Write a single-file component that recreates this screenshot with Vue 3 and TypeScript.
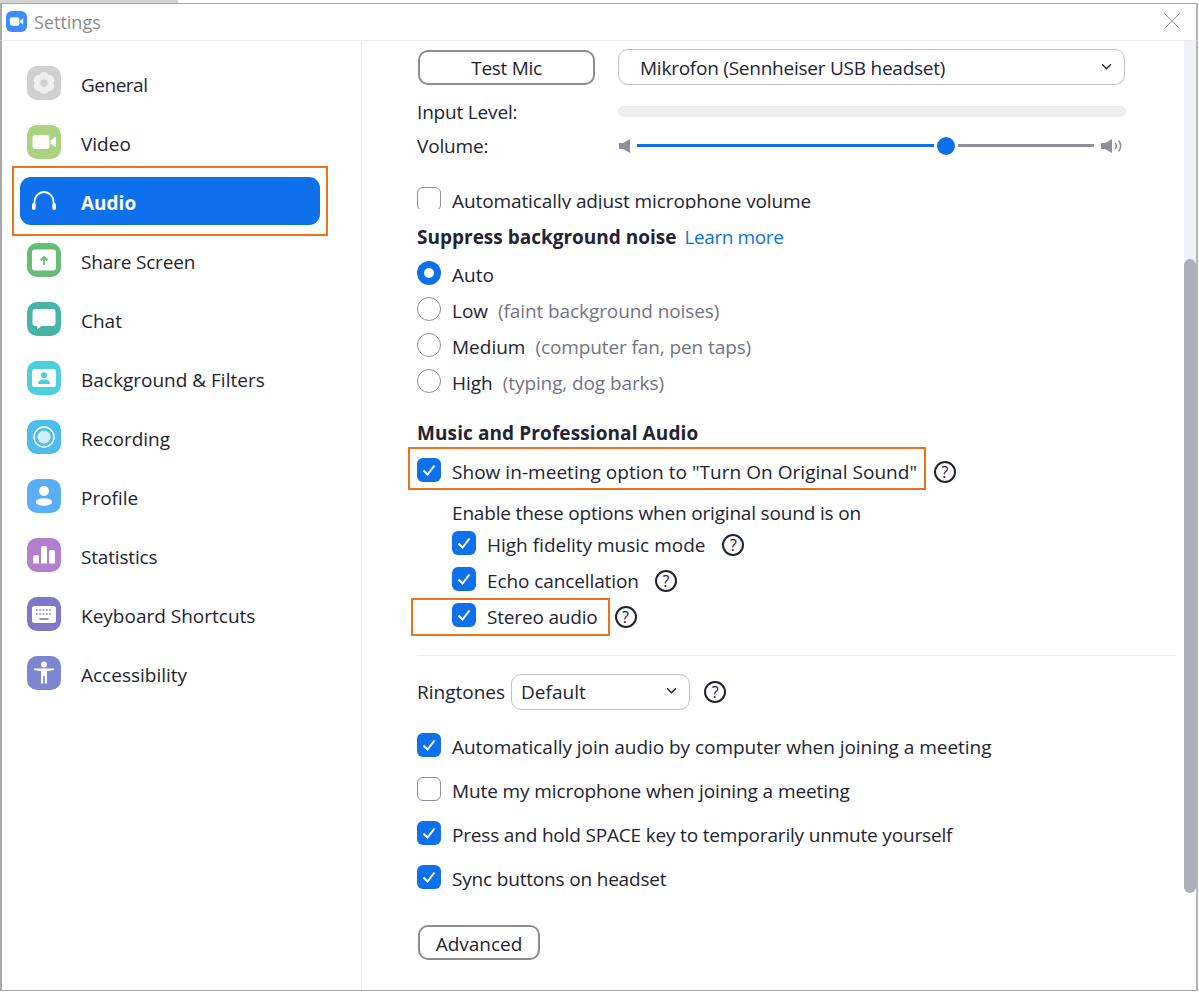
<script setup lang="ts">
interface NavItem { key: string; label: string; color: string; fit: string }
const nav: NavItem[] = [
  { key: 'general', label: 'General', color: '#d0d0d0', fit: 'tightest' },
  { key: 'video', label: 'Video', color: '#a9d37f', fit: '' },
  { key: 'audio', label: 'Audio', color: '', fit: '' },
  { key: 'share', label: 'Share Screen', color: '#67bc76', fit: 'tighter' },
  { key: 'chat', label: 'Chat', color: '#46b5a8', fit: '' },
  { key: 'bg', label: 'Background & Filters', color: '#4dd0dd', fit: '' },
  { key: 'rec', label: 'Recording', color: '#4fbcf0', fit: '' },
  { key: 'profile', label: 'Profile', color: '#5aaef5', fit: '' },
  { key: 'stats', label: 'Statistics', color: '#b57fcf', fit: 'tighter' },
  { key: 'keys', label: 'Keyboard Shortcuts', color: '#7f78c8', fit: '' },
  { key: 'a11y', label: 'Accessibility', color: '#7c87cf', fit: '' },
]
const petals = [0, 60, 120, 180, 240, 300]
const noise = [
  { label: 'Auto', hint: '', on: true },
  { label: 'Low', hint: '(faint background noises)', on: false },
  { label: 'Medium', hint: '(computer fan, pen taps)', on: false },
  { label: 'High', hint: '(typing, dog barks)', on: false },
]
const general = [
  { label: 'Automatically join audio by computer when joining a meeting', on: true, fit: 'slight' },
  { label: 'Mute my microphone when joining a meeting', on: false, fit: 'tight' },
  { label: 'Press and hold SPACE key to temporarily unmute yourself', on: true, fit: 'tighter' },
  { label: 'Sync buttons on headset', on: true, fit: 'tighter' },
]
</script>

<template>
  <div class="window">
    <header class="titlebar">
      <svg class="logo" viewBox="0 0 22 22">
        <rect width="22" height="22" rx="6" fill="#3f8cff" />
        <rect x="4" y="6.500" width="10" height="9" rx="2.400" fill="#fff" />
        <path d="M14.800 10.200 18 7.600v6.800l-3.200-2.600z" fill="#fff" />
      </svg>
      <span class="title">Settings</span>
      <svg class="close" viewBox="0 0 16 16"><path d="M.5.5l15 15M15.500.5l-15 15" stroke="#9a9a9a" fill="none" /></svg>
    </header>
    <div class="body">
      <nav class="sidebar">
        <div v-for="n in nav" :key="n.key" class="nav-row" :class="{ active: n.key === 'audio' }">
          <span v-if="n.key === 'audio'" class="callout nav-callout"></span>
          <span class="nav-icon" :style="{ background: n.color }">
            <svg viewBox="0 0 34 34">
              <g v-if="n.key === 'general'" fill="#efefef">
                <circle v-for="p in petals" :key="p" cx="17" cy="10.800" r="4.800" :transform="`rotate(${p} 17 17)`" />
                <circle cx="17" cy="17" r="7" />
                <circle cx="17" cy="17" r="3.800" fill="#d0d0d0" />
              </g>
              <g v-else-if="n.key === 'video'" fill="#fff">
                <rect x="5.500" y="10" width="17" height="14" rx="3" />
                <path d="M23.500 15.500 29 11.500v11l-5.500-4z" />
              </g>
              <g v-else-if="n.key === 'audio'">
                <path d="M7.500 23v-5.500a9.500 9.500 0 0 1 19 0V23" fill="none" stroke="#fff" stroke-width="1.800" />
                <rect x="5" y="19" width="3.600" height="7" rx="1.800" fill="#fff" />
                <rect x="25.400" y="19" width="3.600" height="7" rx="1.800" fill="#fff" />
              </g>
              <g v-else-if="n.key === 'share'">
                <rect x="5" y="6.500" width="24" height="21" rx="3" fill="#fff" />
                <path d="M17 22v-7.500M13.500 17.500l3.500-3.500 3.500 3.500" fill="none" stroke="#67bc76" stroke-width="1.800" />
              </g>
              <path v-else-if="n.key === 'chat'" fill="#fff" d="M8.500 7h17a3 3 0 0 1 3 3v11a3 3 0 0 1-3 3H14.500l-4.500 3.500V24H8.500a3 3 0 0 1-3-3V10a3 3 0 0 1 3-3z" />
              <g v-else-if="n.key === 'bg'">
                <rect x="5" y="8" width="24" height="18" rx="2.500" fill="#fff" />
                <circle cx="17" cy="14.300" r="3" fill="#4dd0dd" />
                <path d="M11 23c0-3.500 2.500-4.500 6-4.500s6 1 6 4.500z" fill="#4dd0dd" />
              </g>
              <g v-else-if="n.key === 'rec'" fill="none" stroke="#fff">
                <circle cx="17" cy="17" r="10" stroke-width="1.500" />
                <circle cx="17" cy="17" r="6.500" fill="#fff" fill-opacity=".75" stroke="none" />
              </g>
              <g v-else-if="n.key === 'profile'" fill="#fff">
                <circle cx="17" cy="12" r="5" />
                <ellipse cx="17" cy="23" rx="8.200" ry="3.800" />
              </g>
              <g v-else-if="n.key === 'stats'" fill="#fff">
                <path d="M6.300 25.500V18.500a1.500 1.500 0 0 1 1.500-1.500h2.700a1.500 1.500 0 0 1 1.500 1.500v7z" />
                <path d="M14 25.500V10a2 2 0 0 1 2-2h2a2 2 0 0 1 2 2v15.500z" />
                <path d="M22 25.500V14a2 2 0 0 1 2-2h2a2 2 0 0 1 2 2v11.500z" />
              </g>
              <g v-else-if="n.key === 'keys'">
                <rect x="5" y="9" width="24" height="17" rx="2.500" fill="#fff" />
                <path d="M9 13h16M9 17h16" stroke="#7f78c8" stroke-width="1.600" stroke-dasharray="1.600 1.700" />
                <path d="M12.500 22h9" stroke="#7f78c8" stroke-width="1.600" />
              </g>
              <g v-else-if="n.key === 'a11y'" fill="#fff">
                <circle cx="17" cy="8.500" r="3" />
                <path d="M7 12.500h20v1.500l-7 1.300V27.500h-2.200v-7.500h-1.600v7.500H14V15.300L7 14z" />
              </g>
            </svg>
          </span>
          <span class="nav-label" :class="n.fit">{{ n.label }}</span>
        </div>
      </nav>
      <main class="content">
        <div class="scroll-track"></div>
        <div class="scroll-thumb"></div>
        <div class="mic-row">
          <button class="btn test-btn">Test Mic</button>
          <div class="select mic-select">
            <span class="mic-name">Mikrofon (Sennheiser USB headset)</span>
            <svg class="chev" viewBox="0 0 10 6"><path d="M1 1l4 4 4-4" fill="none" stroke="#232333" stroke-width="1.300" /></svg>
          </div>
        </div>
        <div class="level-row">
          <span class="row-label tighter">Input Level:</span>
          <div class="level"></div>
        </div>
        <div class="volume-row">
          <span class="row-label tighter">Volume:</span>
          <div class="volume">
            <svg class="spk-small" viewBox="0 0 11 14"><path d="M0 4h4l7-4v14l-7-4H0z" fill="#8f8f9c" /></svg>
            <div class="track">
              <span class="track-on"></span>
              <span class="thumb"></span>
              <span class="track-off"></span>
            </div>
            <svg class="spk-big" viewBox="0 0 22 14"><path d="M0 4h4l7-4v14l-7-4H0z" fill="#8f8f9c" /><path d="M14 4a4.500 4.500 0 0 1 0 6M17.500 1.500a8 8 0 0 1 0 11" fill="none" stroke="#8f8f9c" stroke-width="1.600" /></svg>
          </div>
        </div>
        <div class="clipped">
          <div class="check-row top">
            <span class="box"></span>
            <span class="tight">Automatically adjust microphone volume</span>
          </div>
        </div>
        <div class="heading noise-head">
          <b>Suppress background noise</b>
          <a class="link">Learn more</a>
        </div>
        <div class="radios">
          <div v-for="r in noise" :key="r.label" class="radio-row">
            <span class="radio" :class="{ on: r.on }"></span>
            <span>{{ r.label }}</span>
            <span v-if="r.hint" class="hint">{{ r.hint }}</span>
          </div>
        </div>
        <div class="heading music-head"><b>Music and Professional Audio</b></div>
        <div class="check-row original">
          <span class="callout original-callout"></span>
          <span class="box on"><svg viewBox="0 0 24 24"><path d="M6.500 12.500l4 4 7-9" /></svg></span>
          <span class="wide">Show in-meeting option to "Turn On Original Sound"</span>
          <span class="help original-help">?</span>
        </div>
        <div class="sub">
          <div class="sub-title tighter">Enable these options when original sound is on</div>
          <div class="check-row sub-row">
            <span class="box on"><svg viewBox="0 0 24 24"><path d="M6.500 12.500l4 4 7-9" /></svg></span>
            <span>High fidelity music mode</span>
            <span class="help gap-high">?</span>
          </div>
          <div class="check-row sub-row">
            <span class="box on"><svg viewBox="0 0 24 24"><path d="M6.500 12.500l4 4 7-9" /></svg></span>
            <span class="tight">Echo cancellation</span>
            <span class="help gap-echo">?</span>
          </div>
          <div class="check-row sub-row">
            <span class="callout stereo-callout"></span>
            <span class="box on"><svg viewBox="0 0 24 24"><path d="M6.500 12.500l4 4 7-9" /></svg></span>
            <span class="tighter">Stereo audio</span>
            <span class="help gap-stereo">?</span>
          </div>
        </div>
        <div class="divider"></div>
        <div class="ring-row">
          <span>Ringtones</span>
          <div class="select ring-select">
            <span>Default</span>
            <svg class="chev" viewBox="0 0 10 6"><path d="M1 1l4 4 4-4" fill="none" stroke="#232333" stroke-width="1.300" /></svg>
          </div>
          <span class="help">?</span>
        </div>
        <div class="general">
          <div v-for="g in general" :key="g.label" class="check-row general-row">
            <span class="box" :class="{ on: g.on }"><svg v-if="g.on" viewBox="0 0 24 24"><path d="M6.500 12.500l4 4 7-9" /></svg></span>
            <span :class="g.fit">{{ g.label }}</span>
          </div>
        </div>
        <button class="btn adv-btn">Advanced</button>
      </main>
    </div>
  </div>
</template>

<style>
html, body { background: #fff; }
</style>

<style scoped>
.window {
  box-sizing: border-box;
  width: 1199px;
  height: 992px;
  padding: 3px 1px 1px 0;
  font-family: "Open Sans", "Noto Sans", sans-serif;
  font-size: 19px;
  color: #232333;
  overflow: hidden;
  display: flex;
  flex-direction: column;
  background: linear-gradient(#d4d4d4, #d4d4d4) no-repeat 0 0 / 178px 3px;
}
.slight { letter-spacing: -0.035px; }
.wide { letter-spacing: 0.04px; }
.tight { letter-spacing: -0.1px; }
.tighter { letter-spacing: -0.18px; }
.tightest { letter-spacing: -0.5px; }
.titlebar {
  flex: none;
  height: 34px;
  display: flex;
  align-items: center;
  padding: 0 0 2px 4px;
  background: #fff;
  border-top: 1px solid #a9a9a9;
  border-left: 2px solid #a9a9a9;
  border-right: 2px solid #b5b5b5;
  border-bottom: 1px solid #ececec;
}
.logo { width: 21px; height: 21px; }
.title { margin: 2px 0 0 7px; color: #8c8c8c; font-size: 18px; }
.close { width: 16px; height: 16px; margin-left: auto; margin-right: 16px; }
.body {
  flex: 1;
  display: flex;
  min-height: 0;
  border-left: 2px solid #a9a9a9;
  border-right: 2px solid #b5b5b5;
  border-bottom: 1px solid #a9a9a9;
}
.sidebar {
  flex: none;
  width: 360px;
  box-sizing: border-box;
  border-right: 1px solid #ececec;
  padding-top: 12px;
}
.nav-row {
  position: relative;
  height: 59px;
  display: flex;
  align-items: center;
  padding-left: 25px;
}
.nav-icon {
  align-self: flex-start;
  margin-top: 13px;
  width: 34px;
  height: 34px;
  border-radius: 10px;
  flex: none;
}
.nav-icon svg { display: block; width: 34px; height: 34px; }
.nav-label { margin-left: 20px; margin-top: 5px; }
.active::before {
  content: "";
  position: absolute;
  left: 18px;
  top: 6px;
  width: 300px;
  height: 48px;
  border-radius: 11px;
  background: #0e71eb;
}
.active .nav-icon, .active .nav-label { position: relative; }
.active .nav-label { color: #fff; font-weight: 700; }
.callout {
  position: absolute;
  box-sizing: border-box;
  border: 2px solid #ed7218;
  pointer-events: none;
}
.nav-callout { left: 10px; top: -5px; width: 316px; height: 70px; }
.content {
  position: relative;
  flex: 1;
  min-width: 0;
  padding: 9px 0 0 55px;
}
.scroll-track {
  position: absolute;
  right: 0;
  top: 0;
  width: 12px;
  height: 220px;
  background: #f1f1f8;
}
.scroll-thumb {
  position: absolute;
  right: 0;
  top: 218px;
  width: 12px;
  height: 634px;
  border-radius: 6px;
  background: #aeaeb8;
}
.mic-row { display: flex; align-items: flex-start; gap: 23px; height: 36px; padding-left: 1px; }
.btn {
  box-sizing: border-box;
  font: inherit;
  color: inherit;
  background: #fff;
  border: 2px solid #8d8d8d;
  border-radius: 10px;
  padding: 0;
}
.test-btn { width: 177px; height: 35px; letter-spacing: -0.3px; }
.select {
  box-sizing: border-box;
  display: flex;
  align-items: center;
  justify-content: space-between;
  border: 1px solid #c0c0c8;
  border-radius: 10px;
}
.mic-select { width: 507px; height: 36px; margin-top: -1px; padding: 2px 12px 0 21px; }
.mic-name { letter-spacing: -0.24px; }
.chev { width: 11px; height: 7px; margin-bottom: 4px; }
.level-row, .volume-row { display: flex; align-items: center; }
.level-row { margin-top: 9px; height: 33px; }
.row-label { width: 201px; flex: none; }
.level { width: 508px; height: 11px; border-radius: 6px; background: #eeeeee; }
.volume-row { height: 35px; }
.volume { width: 505px; display: flex; align-items: center; }
.spk-small { width: 11px; height: 14px; flex: none; margin-left: 1px; }
.spk-big { width: 22px; height: 14px; flex: none; margin-left: 7px; }
.track { flex: 1; display: flex; align-items: center; margin-left: 7px; }
.track-on { width: 297px; height: 3px; background: #0e71eb; }
.thumb { width: 18px; height: 18px; border-radius: 50%; background: #0e71eb; margin: 0 3px; }
.track-off { flex: 1; height: 3px; background: #8f8f9c; }
.clipped { margin-top: 22px; padding-top: 3px; height: 21px; overflow: hidden; }
.check-row { position: relative; display: flex; align-items: center; }
.top { height: 26px; }
.box {
  box-sizing: border-box;
  flex: none;
  width: 24px;
  height: 24px;
  margin: 0 11px 4px 0;
  border: 1px solid #8f8f9c;
  border-radius: 6px;
  background: #fff;
}
.box.on { border: 0; background: #0e71eb; }
.box svg { display: block; width: 24px; height: 24px; fill: none; stroke: #fff; stroke-width: 2; }
.heading { display: flex; align-items: baseline; gap: 8px; }
.noise-head { margin-top: 15px; height: 26px; }
.music-head b { letter-spacing: 0.1px; }
.link { color: #0e71eb; letter-spacing: -0.4px; }
.radios { margin-top: 7px; }
.radio-row { display: flex; align-items: center; height: 36px; }
.radio {
  box-sizing: border-box;
  flex: none;
  width: 24px;
  height: 24px;
  margin: 0 11px 5px 0;
  border: 1px solid #8f8f9c;
  border-radius: 50%;
}
.radio.on { border: 7px solid #0e71eb; }
.hint { margin-left: 10px; color: #747487; letter-spacing: -0.1px; }
.music-head { margin-top: 19px; height: 26px; }
.original { margin-top: 13px; height: 26px; }
.original-callout { left: -9px; top: -12px; width: 518px; height: 43px; }
.help {
  box-sizing: border-box;
  flex: none;
  display: inline-block;
  width: 22px;
  height: 22px;
  border: 2px solid #232333;
  border-radius: 50%;
  font-size: 16px;
  line-height: 18px;
  text-align: center;
}
.original-help { margin-left: 17px; }
.sub { margin-left: 35px; margin-top: 15px; }
.sub-title { height: 27px; }
.sub-row { height: 36px; }
.gap-high { margin-left: 17px; }
.gap-echo { margin-left: 16px; }
.gap-stereo { margin-left: 17px; }
.stereo-callout { left: -41px; top: -1px; width: 199px; height: 38px; }
.divider { margin-top: 20px; height: 1px; background: #eeeeee; margin-right: 20px; }
.ring-row { display: flex; align-items: center; margin-top: 18px; height: 36px; }
.ring-select { width: 179px; height: 36px; margin: 0 14px 0 6px; padding: 0 12px 0 9px; }
.general { margin-top: 15px; }
.general-row { height: 44px; }
.general-row:last-child { height: 43px; }
.adv-btn { margin: 25px 0 0 1px; width: 122px; height: 35px; padding-top: 2px; }
</style>
